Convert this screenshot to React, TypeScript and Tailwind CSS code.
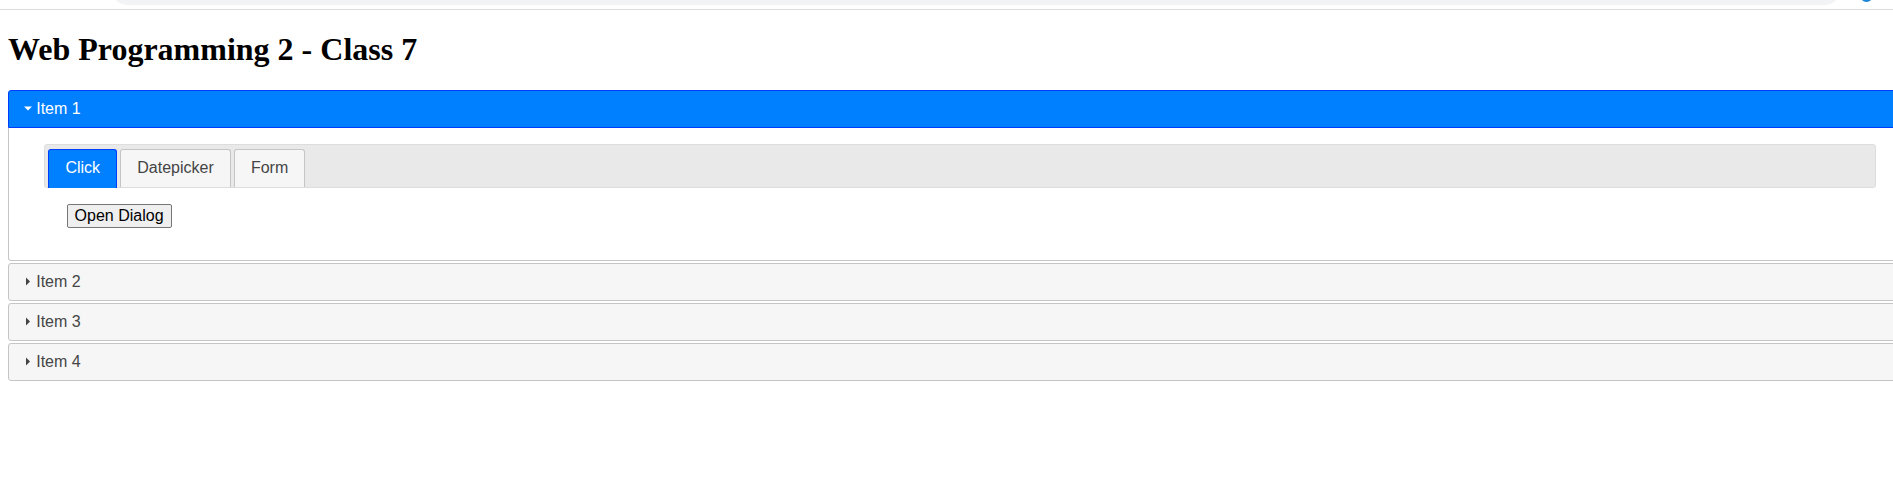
import { useState } from "react";

const items = ["Item 1", "Item 2", "Item 3", "Item 4"];
const tabs = ["Click", "Datepicker", "Form"];

function TriangleSouth() {
  return (
    <svg width="16" height="16" viewBox="0 0 16 16" className="shrink-0 -mt-[1px]">
      <polygon points="4,6.5 12,6.5 8,10.5" fill="#ffffff" />
    </svg>
  );
}

function TriangleEast() {
  return (
    <svg width="16" height="16" viewBox="0 0 16 16" className="shrink-0 -mt-[1px]">
      <polygon points="6,4.5 10,8.5 6,12.5" fill="#444444" />
    </svg>
  );
}

export default function App() {
  const [open, setOpen] = useState(0);
  const [activeTab, setActiveTab] = useState(0);

  return (
    <div className="w-full overflow-hidden bg-white">
      {/* browser chrome remnant */}
      <div className="h-[10px] border-b border-[#dadce0] flex overflow-hidden">
        <div className="ml-[112px] w-[1728px] h-[30px] -mt-[25px] rounded-full bg-[#f1f3f4] shrink-0" />
        <div className="ml-[20px] w-[13px] h-[13px] -mt-[11px] rounded-full bg-[#1b86d8] shrink-0" />
      </div>

      <div className="w-[1920px] px-[8px] pt-[21.44px] pb-[8px]">
        <h1 className="font-['Liberation_Serif','Times_New_Roman',serif] text-[32px] font-bold leading-[normal] text-black mb-[21.44px]">
          Web Programming 2 - Class 7
        </h1>

        <div className="font-['Liberation_Sans',Arial,sans-serif] text-[16px] leading-[20px]">
          {items.map((item, i) => (
            <div key={item}>
              {open === i ? (
                <>
                  <div
                    className={
                      "flex items-center border border-[#003eff] bg-[#007fff] text-white rounded-t-[3px] pl-[11.2px] pr-[8px] py-[8px] cursor-pointer" +
                      (i > 0 ? " mt-[2px]" : "")
                    }
                    onClick={() => setOpen(i)}
                  >
                    <TriangleSouth />
                    <span>{item}</span>
                  </div>
                  <div className="border border-t-0 border-[#c5c5c5] rounded-b-[3px] px-[35.2px] py-[16px] text-[#333333]">
                    <div className="flex items-start border border-[#dddddd] bg-[#e9e9e9] rounded-[3px] px-[3.2px] pt-[3.2px] leading-[20.8px]">
                      {tabs.map((tab, t) =>
                        t === activeTab ? (
                          <div
                            key={tab}
                            className="mt-[1px] mr-[3.2px] -mb-[1px] pb-[1px] border border-b-0 border-[#003eff] bg-[#007fff] text-white rounded-t-[3px] cursor-pointer"
                            onClick={() => setActiveTab(t)}
                          >
                            <div className="px-[16px] py-[8px] whitespace-nowrap">{tab}</div>
                          </div>
                        ) : (
                          <div
                            key={tab}
                            className="mt-[1px] mr-[3.2px] border border-b-0 border-[#c5c5c5] bg-[#f6f6f6] text-[#454545] rounded-t-[3px] cursor-pointer"
                            onClick={() => setActiveTab(t)}
                          >
                            <div className="px-[16px] py-[8px] whitespace-nowrap">{tab}</div>
                          </div>
                        )
                      )}
                    </div>
                    <div className="px-[22.4px] py-[16px]">
                      <button className="border border-[#767676] rounded-[2px] bg-[#efefef] text-black px-[7px] py-[2px] leading-[normal] text-[16px] font-['Liberation_Sans',Arial,sans-serif]">
                        Open Dialog
                      </button>
                    </div>
                  </div>
                </>
              ) : (
                <div
                  className="flex items-center mt-[2px] border border-[#c5c5c5] bg-[#f6f6f6] text-[#454545] rounded-[3px] pl-[11.2px] pr-[8px] py-[8px] cursor-pointer"
                  onClick={() => setOpen(i)}
                >
                  <TriangleEast />
                  <span>{item}</span>
                </div>
              )}
            </div>
          ))}
        </div>
      </div>
    </div>
  );
}
